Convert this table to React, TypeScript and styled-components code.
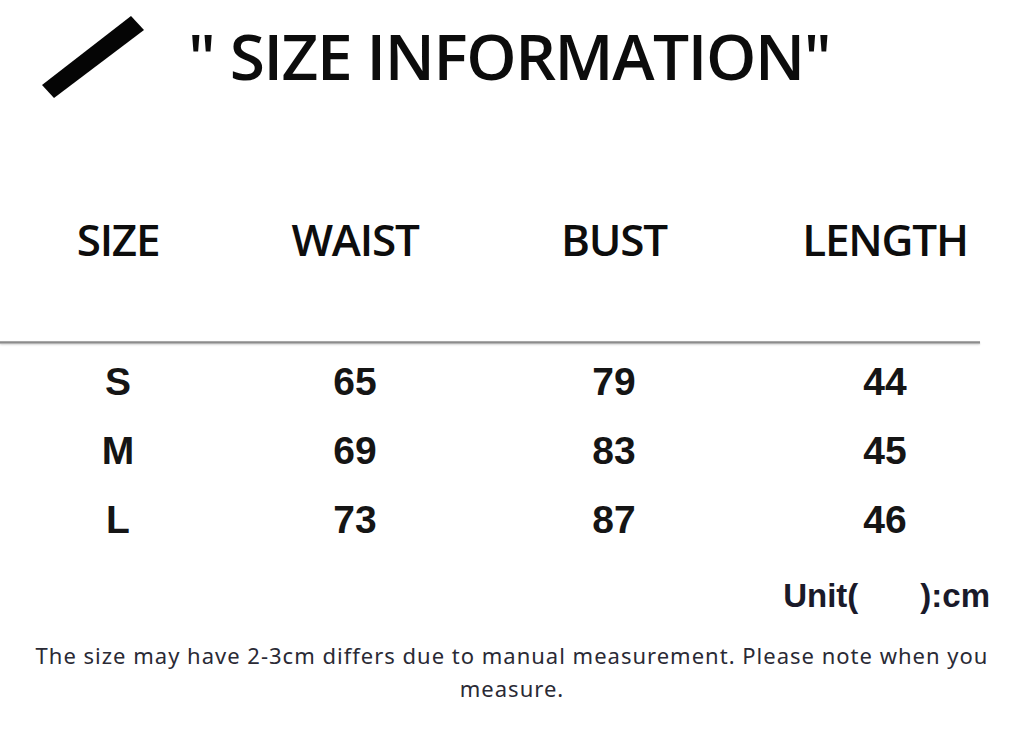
import * as React from 'react';
import styled, { createGlobalStyle } from 'styled-components';

const GlobalStyle = createGlobalStyle`
  html, body {
    margin: 0;
    padding: 0;
    background: #ffffff;
  }
  body {
    width: 1024px;
    height: 753px;
    overflow: hidden;
    font-family: "Liberation Sans", Arial, sans-serif;
    color: #111;
  }
`;

const Page = styled.div`
  width: 1024px;
  height: 753px;
  display: flex;
  flex-direction: column;
`;

const TitleBar = styled.header`
  display: flex;
  align-items: center;
  height: 110px;
  padding-left: 40px;
  gap: 38px;
`;

const Title = styled.h1`
  margin: 0;
  font-family: "Open Sans", sans-serif;
  font-weight: 600;
  font-size: 64px;
  color: #0c0c0c;
  letter-spacing: -1.4px;
  line-height: 1;
  margin-top: 2px;
`;

const Table = styled.div`
  display: grid;
  grid-template-columns: 236px 238px 280px 262px;
`;

const HeadRow = styled.div`
  display: contents;
`;

const HeadCell = styled.div`
  font-family: "Open Sans", sans-serif;
  font-weight: 600;
  font-size: 44px;
  letter-spacing: -1.2px;
  text-align: center;
  height: 64px;
  line-height: 64px;
  margin-top: 97px;
  color: #0d0d0d;
`;

const Divider = styled.div`
  grid-column: 1 / -1;
  width: 980px;
  height: 3px;
  margin-top: 70px;
  margin-bottom: 3px;
  background: linear-gradient(#b4b4b4, #8c8c8c, #c8c8c8);
  box-shadow: 0 1px 2px rgba(0, 0, 0, 0.15);
`;

const Cell = styled.div`
  font-weight: 700;
  font-size: 39px;
  text-align: center;
  height: 69px;
  line-height: 69px;
  color: #151515;
`;

const UnitRow = styled.div`
  display: flex;
  justify-content: flex-end;
  padding-right: 34px;
  margin-top: 22px;
  font-weight: 700;
  font-size: 33px;
  color: #1a1a2a;
  line-height: 40px;
`;

const UnitGap = styled.span`
  display: inline-block;
  width: 62px;
`;

const Note = styled.p`
  margin: 23px 0 0;
  text-align: center;
  font-family: "Noto Sans", sans-serif;
  font-size: 22px;
  line-height: 33px;
  color: #2a2a35;
  padding: 0 30px;
  letter-spacing: 1px;
`;

const Slash = () => (
  <svg width="110" height="90" viewBox="0 0 110 90">
    <polygon points="2,75 91,6 104,20 14,88" fill="#050505" />
  </svg>
);

const headers = ['SIZE', 'WAIST', 'BUST', 'LENGTH'];
const rows = [
  ['S', '65', '79', '44'],
  ['M', '69', '83', '45'],
  ['L', '73', '87', '46'],
];

export default function App() {
  return (
    <Page>
      <GlobalStyle />
      <TitleBar>
        <Slash />
        <Title>" SIZE INFORMATION"</Title>
      </TitleBar>
      <Table>
        <HeadRow>
          {headers.map((h) => (
            <HeadCell key={h}>{h}</HeadCell>
          ))}
        </HeadRow>
        <Divider />
        {rows.map((r) =>
          r.map((v, i) => <Cell key={`${r[0]}-${i}`}>{v}</Cell>),
        )}
      </Table>
      <UnitRow>
        Unit(<UnitGap />):cm
      </UnitRow>
      <Note>
        The size may have 2-3cm differs due to manual measurement. Please note
        when you measure.
      </Note>
    </Page>
  );
}
